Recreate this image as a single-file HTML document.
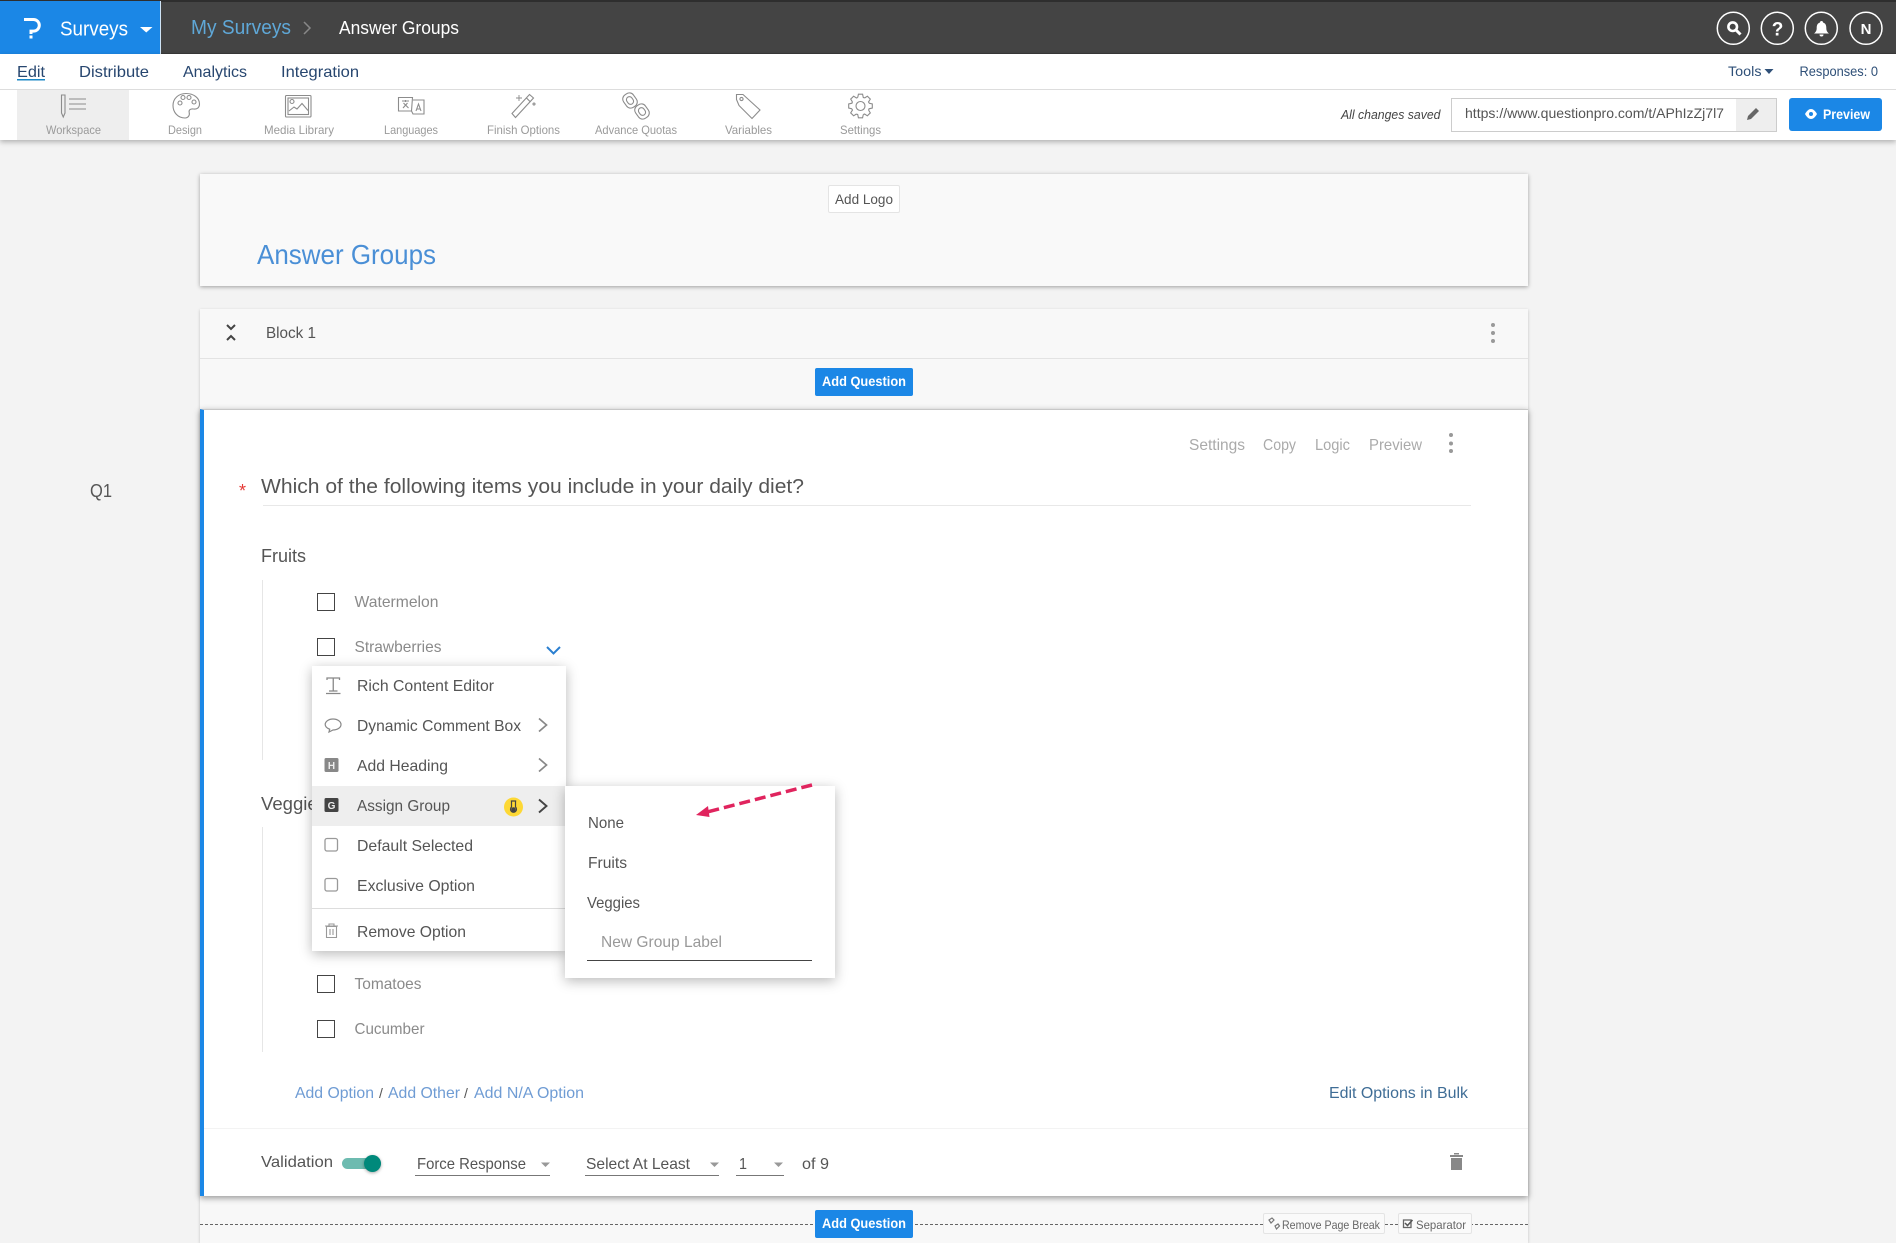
<!DOCTYPE html>
<html lang="en"><head><meta charset="utf-8"><title>Answer Groups</title>
<style>
html,body{margin:0;padding:0;background:#f3f3f3;}
body{position:relative;width:1896px;height:1243px;overflow:hidden;font-family:"Liberation Sans",sans-serif;}
.b{position:absolute;box-sizing:border-box;}
svg{position:absolute;left:0;top:0;}
text{font-family:"Liberation Sans",sans-serif;}
</style></head><body>
<div class="b" style="left:0;top:0;width:1896px;height:54px;background:#444;border-top:2px solid #2e2e2e;border-bottom:1px solid #3a3a3a"></div>
<div class="b" style="left:0;top:1px;width:161px;height:53px;background:#1b87e6;border-right:1px solid #cfe3f5"></div>
<div class="b" style="left:0;top:54px;width:1896px;height:86px;background:#fff;box-shadow:0 2px 5px rgba(0,0,0,.28)"></div>
<div class="b" style="left:0;top:89px;width:1896px;height:1px;background:#ddd"></div>
<div class="b" style="left:17px;top:90px;width:112px;height:50px;background:#eee"></div>
<div class="b" style="left:1451px;top:98px;width:326px;height:34px;background:#fff;border:1px solid #ccc;"></div>
<div class="b" style="left:1736px;top:99px;width:40px;height:32px;background:#eee"></div>
<div class="b" style="left:1789px;top:98px;width:93px;height:33px;background:#1b87e6;border-radius:3px"></div>

<div class="b" style="left:200px;top:174px;width:1328px;height:112px;background:#f9f9f9;box-shadow:0 1px 4px rgba(0,0,0,.35)"></div>
<div class="b" style="left:828px;top:185px;width:72px;height:28px;background:#fff;border:1px solid #e4e4e4;border-radius:2px"></div>
<div class="b" style="left:200px;top:309px;width:1328px;height:934px;background:#f8f8f8;box-shadow:0 1px 3px rgba(0,0,0,.2)"></div>
<div class="b" style="left:200px;top:358px;width:1328px;height:1px;background:#e3e3e3"></div>
<div class="b" style="left:815px;top:368px;width:98px;height:28px;background:#1b87e6;border-radius:2px"></div>
<div class="b" style="left:200px;top:409px;width:1328px;height:787px;background:#fff;border-left:4px solid #1b87e6;border-top:1px solid #c8c8c8;box-shadow:0 2px 6px rgba(0,0,0,.4)"></div>
<div class="b" style="left:263px;top:505px;width:1208px;height:1px;background:#e8e8e8"></div>
<div class="b" style="left:262px;top:580px;width:1px;height:180px;background:#e6e6e6"></div>
<div class="b" style="left:262px;top:827px;width:1px;height:225px;background:#e6e6e6"></div>
<div class="b" style="left:317px;top:593px;width:18px;height:18px;border:1px solid #444"></div>
<div class="b" style="left:317px;top:638px;width:18px;height:18px;border:1px solid #444"></div>
<div class="b" style="left:317px;top:975px;width:18px;height:18px;border:1px solid #444"></div>
<div class="b" style="left:317px;top:1020px;width:18px;height:18px;border:1px solid #444"></div>
<div class="b" style="left:204px;top:1128px;width:1324px;height:1px;background:#f3f3f3"></div>
<div class="b" style="left:415px;top:1175px;width:135px;height:1px;background:#777"></div>
<div class="b" style="left:585px;top:1175px;width:134px;height:1px;background:#777"></div>
<div class="b" style="left:736px;top:1175px;width:48px;height:1px;background:#777"></div>
<div class="b" style="left:342px;top:1158px;width:39px;height:11px;border-radius:6px;background:#6dbbb0"></div>
<div class="b" style="left:364px;top:1155px;width:17px;height:17px;border-radius:50%;background:#00897b;box-shadow:0 1px 3px rgba(0,0,0,.35)"></div>
<div class="b" style="left:200px;top:1224px;width:1328px;height:0;border-top:1px dashed #666"></div>
<div class="b" style="left:815px;top:1210px;width:98px;height:28px;background:#1b87e6;border-radius:2px"></div>
<div class="b" style="left:1263px;top:1213px;width:122px;height:21px;background:#fafafa;border:1px solid #e4e4e4;border-radius:2px"></div>
<div class="b" style="left:1398px;top:1213px;width:74px;height:21px;background:#fafafa;border:1px solid #e4e4e4;border-radius:2px"></div>

<svg width="1896" height="1243" viewBox="0 0 1896 1243" style="z-index:1">
<!-- logo -->
<path d="M24 19.500h9.500a5.800 5.800 0 0 1 0 11.600h-2.500v2.900" fill="none" stroke="#fff" stroke-width="3"/>
<rect x="29.500" y="35.500" width="3" height="3" fill="#fff"/>
<text x="60" y="35.500" font-size="20" fill="#fff" textLength="68" lengthAdjust="spacingAndGlyphs">Surveys</text>
<path d="M140 27h12.500l-6.250 5.500z" fill="#fff"/>
<text x="191" y="34" font-size="20" fill="#5fa8d8" textLength="100" lengthAdjust="spacingAndGlyphs">My Surveys</text>
<path d="M304 22l6 6-6 6" fill="none" stroke="#888" stroke-width="1.500"/>
<text x="339" y="34" font-size="18" fill="#fff" textLength="120" lengthAdjust="spacingAndGlyphs">Answer Groups</text>
<g fill="none" stroke="#fff" stroke-width="1.500">
<circle cx="1733.300" cy="28.300" r="16"/><circle cx="1777.300" cy="28.300" r="16"/><circle cx="1821.300" cy="28.300" r="16"/><circle cx="1866" cy="28.300" r="16"/>
</g>
<circle cx="1732.700" cy="26.700" r="4.300" fill="none" stroke="#fff" stroke-width="2.600"/>
<path d="M1736 30l4.500 4.500" stroke="#fff" stroke-width="3"/>
<text x="1777.500" y="35.500" font-size="19" font-weight="bold" fill="#fff" text-anchor="middle">?</text>
<path d="M1821.500 21a1.500 1.500 0 0 1 1.500 1.500c2.700.8 3.300 3 3.300 5.500 0 2.600.8 4 2.700 5.500h-15c1.900-1.500 2.700-2.900 2.700-5.500 0-2.500.6-4.700 3.300-5.500a1.500 1.500 0 0 1 1.500-1.500zM1819.500 34.500h4a2 2 0 0 1-4 0z" fill="#fff"/>
<text x="1866" y="33.800" font-size="15" font-weight="bold" fill="#fff" text-anchor="middle">N</text>

<g font-size="16" fill="#27466f">
<text x="17" y="77" textLength="28" lengthAdjust="spacingAndGlyphs">Edit</text>
<text x="79" y="77" textLength="70" lengthAdjust="spacingAndGlyphs">Distribute</text>
<text x="183" y="77" textLength="64" lengthAdjust="spacingAndGlyphs">Analytics</text>
<text x="281" y="77" textLength="78" lengthAdjust="spacingAndGlyphs">Integration</text>
</g>
<rect x="17" y="79" width="28" height="1.500" fill="#1b87c6"/>
<g font-size="14" fill="#2f5078">
<text x="1728" y="76" textLength="33.500" lengthAdjust="spacingAndGlyphs">Tools</text>
<text x="1799.500" y="76" textLength="78.500" lengthAdjust="spacingAndGlyphs">Responses: 0</text>
</g>
<path d="M1764.500 69h9l-4.500 5z" fill="#2f5078"/>

<g font-size="12" fill="#9a9a9a">
<text x="46" y="134" textLength="55" lengthAdjust="spacingAndGlyphs">Workspace</text>
<text x="168" y="134" textLength="34" lengthAdjust="spacingAndGlyphs">Design</text>
<text x="264" y="134" textLength="70" lengthAdjust="spacingAndGlyphs">Media Library</text>
<text x="384" y="134" textLength="54" lengthAdjust="spacingAndGlyphs">Languages</text>
<text x="487" y="134" textLength="73" lengthAdjust="spacingAndGlyphs">Finish Options</text>
<text x="595" y="134" textLength="82" lengthAdjust="spacingAndGlyphs">Advance Quotas</text>
<text x="725" y="134" textLength="47" lengthAdjust="spacingAndGlyphs">Variables</text>
<text x="840" y="134" textLength="41" lengthAdjust="spacingAndGlyphs">Settings</text>
</g>
<g fill="none" stroke="#8c8c8c" stroke-width="1.100">
<!-- workspace -->
<path d="M61.500 95h3.500v18l-1.750 4-1.750-4z"/><path d="M69 99h17M69 104h17M69 109h17"/>
<!-- palette -->
<path d="M186 93.500c8 0 13.500 4.800 13.500 10.500 0 4-3 5.500-6 5-3-.5-5 1-4.300 3.500.7 2.500-.8 5.500-4.200 5.500-7 0-12-5.500-12-12.500s5.500-12 13-12z"/>
<circle cx="180" cy="103" r="2"/><circle cx="183" cy="97.500" r="2"/><circle cx="189" cy="97.500" r="2"/><circle cx="194" cy="102" r="2"/>
<!-- media -->
<rect x="285.500" y="95.500" width="25.500" height="21.500" rx="1"/><rect x="288" y="98" width="20.500" height="16.500"/>
<circle cx="292" cy="101.500" r="2"/><path d="M289 111l5-4 3 2 5-5.500 6 7"/>
<!-- languages -->
<path d="M398.500 97.500h14l-1 13.500h-13z"/><path d="M413 100h11v14h-11l-1.500-3"/>
<path d="M402 101h7M405.500 100v2M403 108l4.500-5M403.500 103l5 5"/><path d="M416 111l2.500-7 2.500 7M417 109h3"/>
<!-- wand -->
<path d="M512 113.500l17.500-19 4 3.500-18 19.500z"/><path d="M526.500 98l3.500 3.500"/>
<path d="M519 95v6M516 98h6" stroke-width=".9"/>
<circle cx="534" cy="104" r="1"/>
<!-- chain -->
<rect x="624" y="93" width="12" height="15" rx="5" transform="rotate(-35 630 100.500)"/>
<rect x="627" y="96.500" width="6" height="8" rx="3" transform="rotate(-35 630 100.500)"/>
<rect x="636" y="104" width="12" height="15" rx="5" transform="rotate(-35 642 111.500)"/>
<rect x="639" y="107.500" width="6" height="8" rx="3" transform="rotate(-35 642 111.500)"/>
<!-- tag -->
<path d="M736.500 99.500v-5h6.500l17 15.500-8 8.500-13-13z"/><circle cx="741.500" cy="99" r="1.600"/>
<!-- gear -->
<g transform="translate(860.500 106)">
<circle r="4.500"/>
<path d="M-2.780-8.560L-2.080-11.800L2.080-11.800L2.780-8.560A9 9 0 0 1 4.090-8.020"/>
<path transform="rotate(45)" d="M-2.780-8.560L-2.080-11.800L2.080-11.800L2.780-8.560A9 9 0 0 1 4.090-8.020"/>
<path transform="rotate(90)" d="M-2.780-8.560L-2.080-11.800L2.080-11.800L2.780-8.560A9 9 0 0 1 4.090-8.020"/>
<path transform="rotate(135)" d="M-2.780-8.560L-2.080-11.800L2.080-11.800L2.780-8.560A9 9 0 0 1 4.090-8.020"/>
<path transform="rotate(180)" d="M-2.780-8.560L-2.080-11.800L2.080-11.800L2.780-8.560A9 9 0 0 1 4.090-8.020"/>
<path transform="rotate(225)" d="M-2.780-8.560L-2.080-11.800L2.080-11.800L2.780-8.560A9 9 0 0 1 4.090-8.020"/>
<path transform="rotate(270)" d="M-2.780-8.560L-2.080-11.800L2.080-11.800L2.780-8.560A9 9 0 0 1 4.090-8.020"/>
<path transform="rotate(315)" d="M-2.780-8.560L-2.080-11.800L2.080-11.800L2.780-8.560A9 9 0 0 1 4.090-8.020"/>
</g>
</g>

<text x="1341" y="119" font-size="13" font-style="italic" fill="#444" textLength="99.500" lengthAdjust="spacingAndGlyphs">All changes saved</text>
<text x="1465" y="118" font-size="14" fill="#555" textLength="259" lengthAdjust="spacingAndGlyphs">https://www.questionpro.com/t/APhIzZj7l7</text>
<path d="M1747 120l1-4 8-8 3 3-8 8z" fill="#666"/>
<path d="M1805 114c2-3.500 4-5 6-5s4 1.500 6 5c-2 3.500-4 5-6 5s-4-1.500-6-5z" fill="#fff"/><circle cx="1811" cy="114" r="2" fill="#1b87e6"/>
<text x="1823" y="119" font-size="14" font-weight="bold" fill="#fff" textLength="47" lengthAdjust="spacingAndGlyphs">Preview</text>

<text x="835" y="204" font-size="14" fill="#555" textLength="58" lengthAdjust="spacingAndGlyphs">Add Logo</text>
<text x="257" y="264" font-size="28" fill="#4a8fd6" textLength="179" lengthAdjust="spacingAndGlyphs">Answer Groups</text>
<path d="M227 325l4 4 4-4M227 340l4-4 4 4" fill="none" stroke="#444" stroke-width="2"/>
<text x="266" y="338" font-size="16" fill="#555" textLength="50" lengthAdjust="spacingAndGlyphs">Block 1</text>
<circle cx="1493" cy="325" r="2" fill="#999"/><circle cx="1493" cy="333" r="2" fill="#999"/><circle cx="1493" cy="341" r="2" fill="#999"/>
<text x="822" y="386" font-size="14" font-weight="bold" fill="#fff" textLength="84" lengthAdjust="spacingAndGlyphs">Add Question</text>

<g font-size="16" fill="#aaa">
<text x="1189" y="450" textLength="56" lengthAdjust="spacingAndGlyphs">Settings</text>
<text x="1263" y="450" textLength="33" lengthAdjust="spacingAndGlyphs">Copy</text>
<text x="1315" y="450" textLength="35" lengthAdjust="spacingAndGlyphs">Logic</text>
<text x="1369" y="450" textLength="53" lengthAdjust="spacingAndGlyphs">Preview</text>
</g>
<circle cx="1451" cy="435" r="2" fill="#999"/><circle cx="1451" cy="443.500" r="2" fill="#999"/><circle cx="1451" cy="451" r="2" fill="#999"/>
<text x="90" y="497" font-size="18" fill="#555" textLength="22" lengthAdjust="spacingAndGlyphs">Q1</text>
<text x="239" y="497" font-size="18" fill="#e53935">*</text>
<text x="261" y="493" font-size="20" fill="#555" textLength="543" lengthAdjust="spacingAndGlyphs">Which of the following items you include in your daily diet?</text>
<text x="261" y="562" font-size="18" fill="#555" textLength="45" lengthAdjust="spacingAndGlyphs">Fruits</text>
<text x="261" y="810" font-size="18" fill="#555" textLength="66" lengthAdjust="spacingAndGlyphs">Veggies</text>
<g font-size="16" fill="#8a8a8a">
<text x="354.500" y="607" textLength="84" lengthAdjust="spacingAndGlyphs">Watermelon</text>
<text x="354.500" y="652" textLength="87" lengthAdjust="spacingAndGlyphs">Strawberries</text>
<text x="354.500" y="989" textLength="67" lengthAdjust="spacingAndGlyphs">Tomatoes</text>
<text x="354.500" y="1034" textLength="70" lengthAdjust="spacingAndGlyphs">Cucumber</text>
</g>
<path d="M547 647l6.500 6.500 6.500-6.500" fill="none" stroke="#2a7fd0" stroke-width="2"/>
<g font-size="16" fill="#6f9cd4">
<text x="295" y="1098" textLength="79" lengthAdjust="spacingAndGlyphs">Add Option</text>
<text x="388" y="1098" textLength="72" lengthAdjust="spacingAndGlyphs">Add Other</text>
<text x="474" y="1098" textLength="110" lengthAdjust="spacingAndGlyphs">Add N/A Option</text>
</g>
<text x="379" y="1098" font-size="14" fill="#555">/</text><text x="464" y="1098" font-size="14" fill="#555">/</text>
<text x="1329" y="1098" font-size="16" fill="#3f6d96" textLength="139" lengthAdjust="spacingAndGlyphs">Edit Options in Bulk</text>
<g font-size="16" fill="#555">
<text x="261" y="1167" textLength="72" lengthAdjust="spacingAndGlyphs">Validation</text>
<text x="417" y="1169" textLength="109" lengthAdjust="spacingAndGlyphs">Force Response</text>
<text x="586" y="1169" textLength="104" lengthAdjust="spacingAndGlyphs">Select At Least</text>
<text x="739" y="1169" textLength="8" lengthAdjust="spacingAndGlyphs">1</text>
<text x="802" y="1169" textLength="27" lengthAdjust="spacingAndGlyphs">of 9</text>
</g>
<path d="M541 1162.500h9l-4.500 4.500zM710 1162.500h9l-4.500 4.500zM774 1162.500h9l-4.500 4.500z" fill="#999"/>
<path d="M1450 1155h13v2h-13zM1454 1153h5v1.500h-5zM1451 1158h11v12h-11z" fill="#888"/>
<text x="822" y="1228" font-size="14" font-weight="bold" fill="#fff" textLength="84" lengthAdjust="spacingAndGlyphs">Add Question</text>
<text x="1282" y="1229" font-size="12" fill="#666" textLength="98" lengthAdjust="spacingAndGlyphs">Remove Page Break</text>
<text x="1416" y="1229" font-size="12" fill="#666" textLength="50" lengthAdjust="spacingAndGlyphs">Separator</text>
<path d="M1269 1220l3-2 2 2-3 3zM1275 1226l3-2 1.500 2-3 3z" fill="none" stroke="#777" stroke-width="1.200"/>
<rect x="1403.500" y="1220" width="7.500" height="7.500" fill="none" stroke="#666" stroke-width="1.300"/>
<path d="M1405 1223l2.500 2.500 5-5.500" fill="none" stroke="#555" stroke-width="1.500"/>
</svg>

<!-- menus -->
<div class="b" style="z-index:2;left:312px;top:666px;width:254px;height:285px;background:#fff;box-shadow:0 3px 12px rgba(0,0,0,.28)"></div>
<div class="b" style="z-index:2;left:312px;top:786px;width:254px;height:40px;background:#eee"></div>
<div class="b" style="z-index:2;left:312px;top:908px;width:254px;height:1px;background:#ddd"></div>
<div class="b" style="z-index:2;left:565px;top:786px;width:270px;height:192px;background:#fff;box-shadow:0 3px 12px rgba(0,0,0,.28)"></div>
<div class="b" style="z-index:2;left:587px;top:960px;width:225px;height:1px;background:#444"></div>

<svg width="1896" height="1243" viewBox="0 0 1896 1243" style="z-index:3">
<g font-size="16" fill="#555">
<text x="357" y="691" textLength="137" lengthAdjust="spacingAndGlyphs">Rich Content Editor</text>
<text x="357" y="731" textLength="164" lengthAdjust="spacingAndGlyphs">Dynamic Comment Box</text>
<text x="357" y="771" textLength="91" lengthAdjust="spacingAndGlyphs">Add Heading</text>
<text x="357" y="811" textLength="93" lengthAdjust="spacingAndGlyphs">Assign Group</text>
<text x="357" y="851" textLength="116" lengthAdjust="spacingAndGlyphs">Default Selected</text>
<text x="357" y="891" textLength="118" lengthAdjust="spacingAndGlyphs">Exclusive Option</text>
<text x="357" y="937" textLength="109" lengthAdjust="spacingAndGlyphs">Remove Option</text>
<text x="588" y="828" textLength="36" lengthAdjust="spacingAndGlyphs">None</text>
<text x="588" y="868" textLength="39" lengthAdjust="spacingAndGlyphs">Fruits</text>
<text x="587" y="908" textLength="53" lengthAdjust="spacingAndGlyphs">Veggies</text>
</g>
<text x="601" y="947" font-size="16" fill="#999" textLength="121" lengthAdjust="spacingAndGlyphs">New Group Label</text>
<!-- menu icons -->
<path d="M327 680v-2h12.500v2M333.250 678v13M329 691h8.500M326 693.500h14.500" fill="none" stroke="#888" stroke-width="1.300"/>
<path d="M333 719c4.500 0 8 2.400 8 5.500s-3.500 5.500-8 5.500l-4 2 .7-2.800c-2.700-1-4.500-2.700-4.500-4.700 0-3.100 3.500-5.500 7.800-5.500z" fill="none" stroke="#888" stroke-width="1.200"/>
<rect x="324.500" y="758" width="14" height="14" rx="1.500" fill="#888"/>
<text x="331.500" y="769" font-size="10" font-weight="bold" fill="#eee" text-anchor="middle">H</text>
<rect x="324.500" y="798" width="14" height="14" rx="1.500" fill="#444"/>
<text x="331.500" y="809" font-size="10" font-weight="bold" fill="#eee" text-anchor="middle">G</text>
<rect x="325" y="838.500" width="12.500" height="12.500" rx="2" fill="none" stroke="#999" stroke-width="1.300"/>
<rect x="325" y="878.500" width="12.500" height="12.500" rx="2" fill="none" stroke="#999" stroke-width="1.300"/>
<path d="M325 926h13M329 926v-2h5v2M326.500 926.500h10v11h-10zM330 929v6M333 929v6" fill="none" stroke="#999" stroke-width="1.100"/>
<path d="M539 718.500l7.500 6.500-7.500 6.500M539 758.500l7.500 6.500-7.500 6.500" fill="none" stroke="#888" stroke-width="1.700"/>
<path d="M539 799.500l7.500 6.500-7.500 6.500" fill="none" stroke="#444" stroke-width="1.900"/>
<circle cx="513.500" cy="807" r="9.500" fill="#fdd835"/>
<path d="M511.500 801v6a3 3 0 1 0 4 0v-6M510.800 801h5.400" fill="none" stroke="#444" stroke-width="1.200"/><circle cx="513.500" cy="809.500" r="2.300" fill="#444"/>
<!-- arrow -->
<path d="M812 785L707 812" fill="none" stroke="#e0245e" stroke-width="3.500" stroke-dasharray="11 5"/>
<path d="M696 815l12-9 1.500 11z" fill="#e0245e"/>
</svg>
</body></html>
